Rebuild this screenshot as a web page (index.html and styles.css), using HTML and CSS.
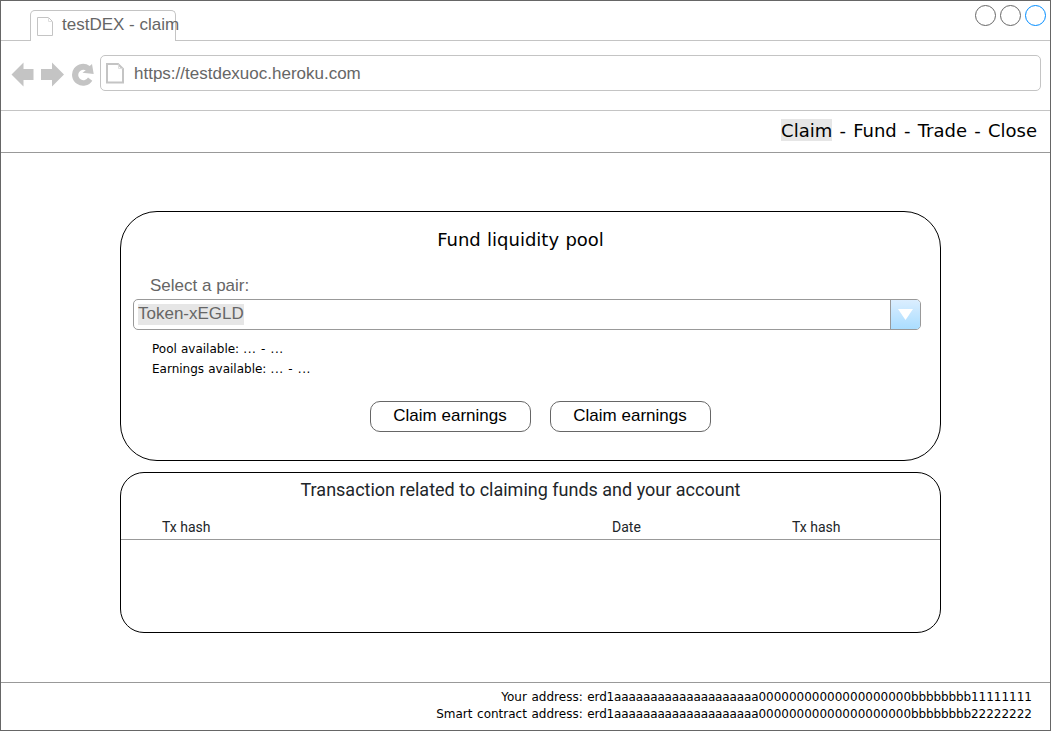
FILE: index.html
```html
<!DOCTYPE html>
<html lang="en">
<head>
<meta charset="utf-8">
<title>testDEX - claim</title>
<link rel="stylesheet" href="styles.css">
</head>
<body>
<div class="window">
  <div class="tab-bar">
    <div class="tab">
      <svg class="tab-icon" width="17" height="19" viewBox="0 0 17 19"><path d="M.5.5h11l4 4v14H.5z"/><path class="fold" d="M11.500.5v4h4"/></svg>
      <span>testDEX - claim</span>
    </div>
    <div class="controls">
      <svg width="71" height="21" viewBox="0 0 71 21"><circle cx="10.500" cy="10.500" r="10"/><circle cx="35.500" cy="10.500" r="10"/><circle class="active" cx="60.500" cy="10.500" r="10"/></svg>
    </div>
  </div>
  <div class="toolbar">
    <svg class="history" width="84" height="26" viewBox="0 0 84 26">
      <path d="M.5 13.500 12.500 1.500v6.500h10v11h-10v6.500z"/>
      <path d="M53 13.500 41 1.500v6.500H30v11h11v6.500z"/>
      <path d="M82.700 13 81 3l-2.300 2A11 11 0 1 0 81.300 19.700L77 16.500A5.200 5.200 0 1 1 74.800 9.300L71.500 11.800z"/>
    </svg>
    <div class="address">
      <svg width="18" height="21" viewBox="0 0 18 21"><path d="M1 1h11l5 5v13.500H1z"/><path class="fold" d="M12.500 1.500v4h4"/></svg>
      <span>https://testdexuoc.heroku.com</span>
    </div>
  </div>
  <nav class="nav"><mark>Claim</mark> - Fund - Trade - Close</nav>
  <main class="main">
    <section class="card pool">
      <h1>Fund liquidity pool</h1>
      <div class="label">Select a pair:</div>
      <div class="select">
        <span class="value"><mark>Token-xEGLD</mark></span>
        <span class="arrow"><svg width="15" height="11" viewBox="0 0 15 11"><path d="M0 0h15L7.500 11z"/></svg></span>
      </div>
      <div class="stats">
        <div>Pool available: <span>... - ...</span></div>
        <div>Earnings available: <span>... - ...</span></div>
      </div>
      <div class="actions">
        <button class="button">Claim earnings</button>
        <button class="button">Claim earnings</button>
      </div>
    </section>
    <section class="card history-card">
      <h2>Transaction related to claiming funds and your account</h2>
      <div class="columns"><span>Tx hash</span><span>Date</span><span>Tx hash</span></div>
    </section>
  </main>
  <footer class="footer">
    <div>Your address: <span class="tight">erd1aaaaaaaaaaaaaaaaaaaa</span>00000000000000000000<span class="tight">bbbbbbbb</span>11111111</div>
    <div>Smart contract address: <span class="tight">erd1aaaaaaaaaaaaaaaaaaaa</span>00000000000000000000<span class="tight">bbbbbbbb</span>22222222</div>
  </footer>
</div>
</body>
</html>
```
FILE: styles.css
```css
* { box-sizing: border-box; }
body { margin: 0; background: #fff; color: #000; font-family: "DejaVu Sans", sans-serif; }
svg { display: block; flex: none; }
mark { background: #e6e6e6; color: inherit; }
.window { width: 1051px; height: 731px; border: 1px solid #666; display: flex; flex-direction: column; }
.tab-bar { height: 40px; border-bottom: 1px solid #c4c4c4; display: flex; justify-content: space-between; padding: 9px 4px 0 29px; }
.tab { width: 147px; height: 31px; border: 1px solid #c4c4c4; border-bottom: 0; border-radius: 5px 5px 0 0; background: #fff; display: flex; padding: 6px 0 0 6px; gap: 8px; color: #666; font: 17px/20px "Liberation Sans", sans-serif; white-space: nowrap; width: 146px; }
.tab span { margin-top: -2px; }
.tab-icon path { fill: none; stroke: #c4c4c4; }
.tab-icon .fold, .address .fold { stroke: #dedede; stroke-width: 1; }
.controls { margin-top: -5px; }
.controls circle { fill: none; stroke: #666; }
.controls .active { stroke: #008cff; }
.toolbar { height: 70px; border-bottom: 1px solid #c4c4c4; display: flex; padding: 14px 9px 0 10px; }
.history { margin: 6px 5px 0 0; fill: #c4c4c4; }
.address { flex: 1; height: 36px; border: 1px solid #c4c4c4; border-radius: 5px; display: flex; align-items: center; padding-left: 5px; gap: 10px; color: #666; font: 17px/20px "Liberation Sans", sans-serif; }
.address span { padding-top: 2px; }
.address path { fill: none; stroke: #c4c4c4; stroke-width: 2; }
.nav { height: 42px; border-bottom: 1px solid #999; padding: 9px 13px 0 0; text-align: right; font-size: 18px; line-height: 21px; word-spacing: 1.5px; }
.nav mark { padding-top: 1px; }
.main { flex: 1; display: flex; flex-direction: column; align-items: flex-start; gap: 11px; padding: 58px 0 0 119px; }
.card { width: 821px; border: 1px solid #000; }
.pool { height: 250px; border-radius: 37px; padding: 17px 19px 0 12px; }
.pool h1 { margin: 0; padding-right: 13px; font-size: 18px; font-weight: 400; line-height: 22px; text-align: center; word-spacing: .6px; }
.label { margin: 25px 0 0 17px; color: #666; font: 17px/20px "Liberation Sans", sans-serif; }
.select { height: 31px; margin-top: 3px; border: 1px solid #999; border-radius: 5px; display: flex; overflow: hidden; color: #666; font: 17px/20px "Liberation Sans", sans-serif; }
.value { flex: 1; padding: 4px; }
.value mark { padding-bottom: 2px; }
.arrow { width: 30px; border-left: 1px solid #999; background: linear-gradient(#dbeeff, #aaddff); display: flex; align-items: center; justify-content: center; }
.arrow path { fill: #fff; }
.stats { margin: 9px 0 0 19px; font-size: 12px; line-height: 20px; word-spacing: .3px; }
.stats span { letter-spacing: .55px; }
.actions { display: flex; justify-content: center; gap: 19px; margin-top: 22px; padding-left: 26px; }
.button { width: 161px; height: 31px; border: 1px solid #666; border-radius: 10px; background: #fff; color: #000; padding: 0 0 1px; font: 17px/20px "Liberation Sans", sans-serif; }
.history-card { height: 161px; border-radius: 24px; color: #212529; font-family: Roboto, sans-serif; }
.history-card h2 { margin: 6px 20px 0 0; font-size: 18px; font-weight: 400; line-height: 22px; text-align: center; }
.columns { display: grid; grid-template-columns: 450px 180px 1fr; height: 39px; padding: 17px 0 0 41px; border-bottom: 1px solid #999; font-size: 14px; line-height: 18px; }
.footer { height: 48px; border-top: 1px solid #999; padding: 6px 18px 0 0; text-align: right; font-size: 12px; line-height: 17px; word-spacing: .8px; }
.tight { letter-spacing: -.14px; }
```
